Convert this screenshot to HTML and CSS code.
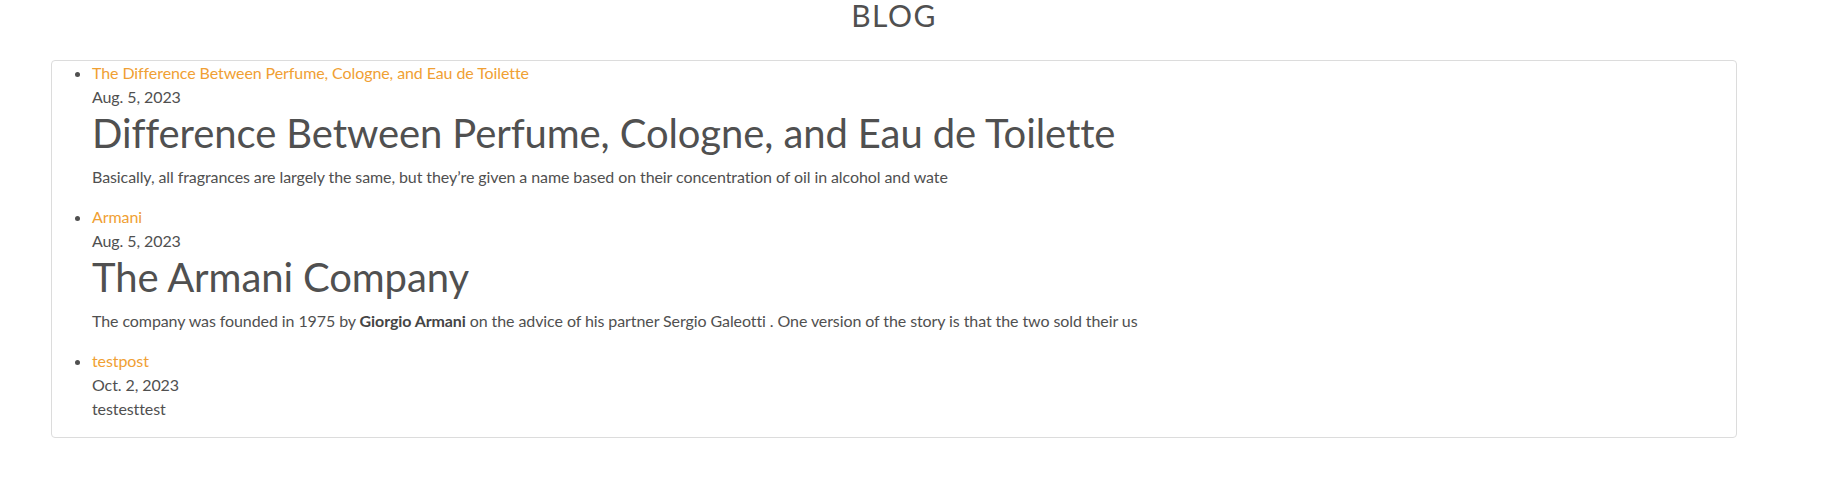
FILE: index.html
```html
<!DOCTYPE html>
<html lang="en">
<head>
<meta charset="utf-8">
<title>Blog</title>
<link rel="stylesheet" href="styles.css">
</head>
<body>
<main class="page">
  <h2 class="page-title">BLOG</h2>
  <section class="card">
    <ul class="post-list">
      <li class="post">
        <a class="post-link" href="#">The Difference Between Perfume, Cologne, and Eau de Toilette</a>
        <div class="post-date">Aug. 5, 2023</div>
        <h1 class="post-heading">Difference Between Perfume, Cologne, and Eau de Toilette</h1>
        <p class="post-excerpt">Basically, all fragrances are largely the same, but they’re given a name based on their concentration of oil in alcohol and wate</p>
      </li>
      <li class="post">
        <a class="post-link" href="#">Armani</a>
        <div class="post-date">Aug. 5, 2023</div>
        <h1 class="post-heading">The Armani Company</h1>
        <p class="post-excerpt">The company was founded in 1975 by <strong>Giorgio Armani</strong> on the advice of his partner Sergio Galeotti . One version of the story is that the two sold their us</p>
      </li>
      <li class="post">
        <a class="post-link" href="#">testpost</a>
        <div class="post-date">Oct. 2, 2023</div>
        <div class="post-text">testesttest</div>
      </li>
    </ul>
  </section>
</main>
</body>
</html>
```

FILE: styles.css
```css
html, body {
  margin: 0;
  padding: 0;
  background: #fff;
}

body {
  font-family: Lato, "Open Sans", "Liberation Sans", sans-serif;
  font-size: 16px;
  line-height: 24px;
  color: #505050;
  font-variant-ligatures: none;
  letter-spacing: -0.09px;
}

.page {
  margin: 0 91px 0 51px;
}

.page-title {
  margin: 0 0 30px;
  font-size: 30px;
  line-height: 30px;
  font-weight: 400;
  letter-spacing: 1.5px;
  text-align: center;
  color: #505050;
}

.card {
  border: 1px solid #dcdcdc;
  border-radius: 4px;
}

.post-list {
  margin: 0;
  padding: 0 0 0 40px;
}

.post {
  margin-bottom: 16px;
}

.post-link {
  color: #f0a033;
  text-decoration: none;
}

.post-date {
  color: #505050;
}

.post-heading {
  margin: 2px 0 0;
  font-size: 40px;
  line-height: 44px;
  font-weight: 400;
  letter-spacing: -0.1px;
  color: #505050;
}

.post-excerpt {
  margin: 10px 0 0;
}

.post-excerpt strong {
  font-weight: 700;
  color: #454545;
}
```
